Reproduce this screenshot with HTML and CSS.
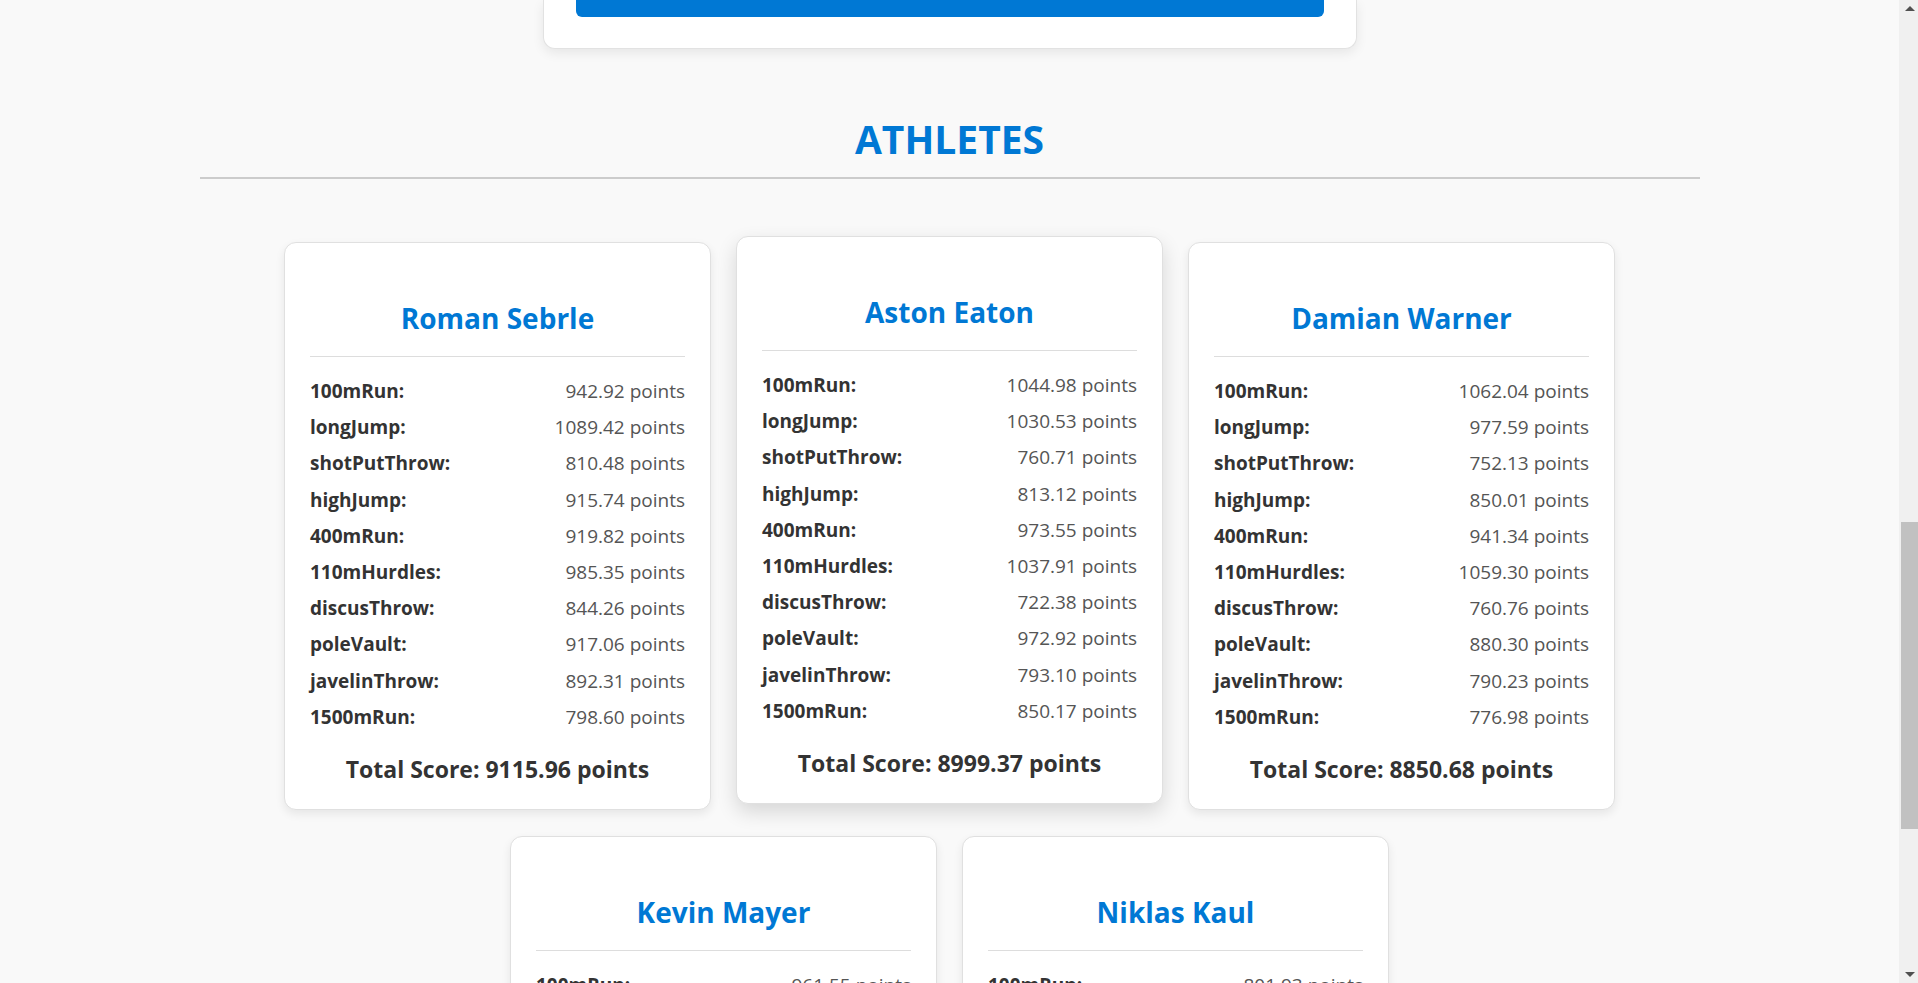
FILE: index.html
```html
<!DOCTYPE html>
<html lang="en">
<head>
<meta charset="utf-8">
<title>Decathlon Athletes</title>
<link rel="stylesheet" href="styles.css">
</head>
<body>
<div class="viewport">
  <main class="page">
    <section class="form-card">
      <button class="submit-btn" type="button" aria-label="Calculate"></button>
    </section>

    <section class="athletes">
      <h2 class="section-title">ATHLETES</h2>
      <div class="card-grid">

        <article class="card">
          <h3 class="card-name">Roman Sebrle</h3>
          <ul class="events">
            <li class="event"><span class="event-name">100mRun:</span><span class="event-score">942.92 points</span></li>
            <li class="event"><span class="event-name">longJump:</span><span class="event-score">1089.42 points</span></li>
            <li class="event"><span class="event-name">shotPutThrow:</span><span class="event-score">810.48 points</span></li>
            <li class="event"><span class="event-name">highJump:</span><span class="event-score">915.74 points</span></li>
            <li class="event"><span class="event-name">400mRun:</span><span class="event-score">919.82 points</span></li>
            <li class="event"><span class="event-name">110mHurdles:</span><span class="event-score">985.35 points</span></li>
            <li class="event"><span class="event-name">discusThrow:</span><span class="event-score">844.26 points</span></li>
            <li class="event"><span class="event-name">poleVault:</span><span class="event-score">917.06 points</span></li>
            <li class="event"><span class="event-name">javelinThrow:</span><span class="event-score">892.31 points</span></li>
            <li class="event"><span class="event-name">1500mRun:</span><span class="event-score">798.60 points</span></li>
          </ul>
          <p class="total">Total Score: 9115.96 points</p>
        </article>

        <article class="card card-raised">
          <h3 class="card-name">Aston Eaton</h3>
          <ul class="events">
            <li class="event"><span class="event-name">100mRun:</span><span class="event-score">1044.98 points</span></li>
            <li class="event"><span class="event-name">longJump:</span><span class="event-score">1030.53 points</span></li>
            <li class="event"><span class="event-name">shotPutThrow:</span><span class="event-score">760.71 points</span></li>
            <li class="event"><span class="event-name">highJump:</span><span class="event-score">813.12 points</span></li>
            <li class="event"><span class="event-name">400mRun:</span><span class="event-score">973.55 points</span></li>
            <li class="event"><span class="event-name">110mHurdles:</span><span class="event-score">1037.91 points</span></li>
            <li class="event"><span class="event-name">discusThrow:</span><span class="event-score">722.38 points</span></li>
            <li class="event"><span class="event-name">poleVault:</span><span class="event-score">972.92 points</span></li>
            <li class="event"><span class="event-name">javelinThrow:</span><span class="event-score">793.10 points</span></li>
            <li class="event"><span class="event-name">1500mRun:</span><span class="event-score">850.17 points</span></li>
          </ul>
          <p class="total">Total Score: 8999.37 points</p>
        </article>

        <article class="card">
          <h3 class="card-name">Damian Warner</h3>
          <ul class="events">
            <li class="event"><span class="event-name">100mRun:</span><span class="event-score">1062.04 points</span></li>
            <li class="event"><span class="event-name">longJump:</span><span class="event-score">977.59 points</span></li>
            <li class="event"><span class="event-name">shotPutThrow:</span><span class="event-score">752.13 points</span></li>
            <li class="event"><span class="event-name">highJump:</span><span class="event-score">850.01 points</span></li>
            <li class="event"><span class="event-name">400mRun:</span><span class="event-score">941.34 points</span></li>
            <li class="event"><span class="event-name">110mHurdles:</span><span class="event-score">1059.30 points</span></li>
            <li class="event"><span class="event-name">discusThrow:</span><span class="event-score">760.76 points</span></li>
            <li class="event"><span class="event-name">poleVault:</span><span class="event-score">880.30 points</span></li>
            <li class="event"><span class="event-name">javelinThrow:</span><span class="event-score">790.23 points</span></li>
            <li class="event"><span class="event-name">1500mRun:</span><span class="event-score">776.98 points</span></li>
          </ul>
          <p class="total">Total Score: 8850.68 points</p>
        </article>

        <article class="card">
          <h3 class="card-name">Kevin Mayer</h3>
          <ul class="events">
            <li class="event"><span class="event-name">100mRun:</span><span class="event-score">961.55 points</span></li>
            <li class="event"><span class="event-name">longJump:</span><span class="event-score">1010.34 points</span></li>
            <li class="event"><span class="event-name">shotPutThrow:</span><span class="event-score">841.79 points</span></li>
            <li class="event"><span class="event-name">highJump:</span><span class="event-score">896.00 points</span></li>
            <li class="event"><span class="event-name">400mRun:</span><span class="event-score">929.26 points</span></li>
            <li class="event"><span class="event-name">110mHurdles:</span><span class="event-score">1007.02 points</span></li>
            <li class="event"><span class="event-name">discusThrow:</span><span class="event-score">783.75 points</span></li>
            <li class="event"><span class="event-name">poleVault:</span><span class="event-score">1035.06 points</span></li>
            <li class="event"><span class="event-name">javelinThrow:</span><span class="event-score">929.53 points</span></li>
            <li class="event"><span class="event-name">1500mRun:</span><span class="event-score">726.44 points</span></li>
          </ul>
          <p class="total">Total Score: 9120.74 points</p>
        </article>

        <article class="card">
          <h3 class="card-name">Niklas Kaul</h3>
          <ul class="events">
            <li class="event"><span class="event-name">100mRun:</span><span class="event-score">801.93 points</span></li>
            <li class="event"><span class="event-name">longJump:</span><span class="event-score">874.02 points</span></li>
            <li class="event"><span class="event-name">shotPutThrow:</span><span class="event-score">783.71 points</span></li>
            <li class="event"><span class="event-name">highJump:</span><span class="event-score">868.17 points</span></li>
            <li class="event"><span class="event-name">400mRun:</span><span class="event-score">866.06 points</span></li>
            <li class="event"><span class="event-name">110mHurdles:</span><span class="event-score">886.86 points</span></li>
            <li class="event"><span class="event-name">discusThrow:</span><span class="event-score">793.40 points</span></li>
            <li class="event"><span class="event-name">poleVault:</span><span class="event-score">972.92 points</span></li>
            <li class="event"><span class="event-name">javelinThrow:</span><span class="event-score">1028.32 points</span></li>
            <li class="event"><span class="event-name">1500mRun:</span><span class="event-score">846.03 points</span></li>
          </ul>
          <p class="total">Total Score: 8721.42 points</p>
        </article>

      </div>
    </section>
  </main>

  <div class="scrollbar" aria-hidden="true">
    <div class="scroll-arrow scroll-up"></div>
    <div class="scroll-track">
      <div class="scroll-thumb"></div>
    </div>
    <div class="scroll-arrow scroll-down"></div>
  </div>
</div>
</body>
</html>
```

FILE: styles.css
```css
* {
  box-sizing: border-box;
}

html,
body {
  margin: 0;
  height: 100%;
  overflow: hidden;
}

body {
  background: #f9f9f9;
  font-family: "Segoe UI", "Open Sans", "Noto Sans", sans-serif;
  color: #333333;
}

.viewport {
  display: flex;
  height: 100%;
}

.page {
  flex: 1;
  min-width: 0;
  overflow: hidden;
}

/* top form card (scrolled, only its bottom is visible) */
.form-card {
  width: 814px;
  margin: 0 auto;
  padding: 0 32px 31px;
  background: #ffffff;
  border: 1px solid #e2e2e2;
  border-top: none;
  border-radius: 0 0 12px 12px;
  box-shadow: 0 4px 12px rgba(0, 0, 0, 0.08);
}

.submit-btn {
  display: block;
  width: 100%;
  height: 17px;
  border: none;
  border-radius: 0 0 6px 6px;
  background: #0078d4;
  padding: 0;
}

/* athletes section */
.athletes {
  max-width: 1500px;
  margin: 66px auto 0;
}

.section-title {
  margin: 0;
  padding-bottom: 14px;
  border-bottom: 2px solid #cccccc;
  text-align: center;
  font-size: 39px;
  line-height: 48px;
  font-weight: 700;
  color: #0078d4;
}

.card-grid {
  display: flex;
  flex-wrap: wrap;
  justify-content: center;
  gap: 26px 25px;
  margin-top: 63px;
}

.card {
  width: 427px;
  padding: 25px;
  background: #ffffff;
  border: 1px solid #e0e0e0;
  border-radius: 12px;
  box-shadow: 0 4px 10px rgba(0, 0, 0, 0.08);
}

.card-raised {
  transform: translateY(-6px);
  box-shadow: 0 8px 20px rgba(0, 0, 0, 0.14);
}

.card-name {
  margin: 33px 0 0;
  padding-bottom: 21px;
  border-bottom: 1px solid #dddddd;
  text-align: center;
  font-size: 28px;
  line-height: 34px;
  font-weight: 700;
  color: #0078d4;
}

.events {
  list-style: none;
  margin: 16px 0 0;
  padding: 0;
}

.event {
  display: flex;
  justify-content: space-between;
  align-items: center;
  padding: 5px 0;
  font-size: 19px;
  line-height: 26.2px;
}

.event-name {
  font-weight: 700;
  color: #333333;
}

.event-score {
  color: #555555;
}

.total {
  margin: 20px 0 0;
  text-align: center;
  font-size: 23px;
  line-height: 29px;
  font-weight: 700;
  color: #333333;
}

/* fake scrollbar */
.scrollbar {
  width: 19px;
  flex: none;
  display: flex;
  flex-direction: column;
  background: #f0f0f0;
}

.scroll-arrow {
  height: 17px;
  display: flex;
  align-items: center;
  justify-content: center;
  padding-left: 2px;
}

.scroll-up::before {
  content: "";
  border-left: 5px solid transparent;
  border-right: 5px solid transparent;
  border-bottom: 5px solid #505050;
}

.scroll-down::before {
  content: "";
  border-left: 5px solid transparent;
  border-right: 5px solid transparent;
  border-top: 5px solid #505050;
}

.scroll-track {
  flex: 1;
  padding-top: 505px;
  padding-left: 2px;
}

.scroll-thumb {
  height: 307px;
  background: #c1c1c1;
}
```
